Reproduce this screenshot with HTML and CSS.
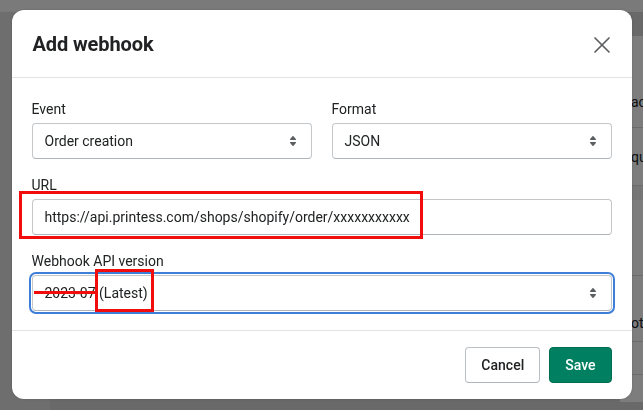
FILE: index.html
```html
<!DOCTYPE html>
<html lang="en">
<head>
<meta charset="utf-8">
<title>Add webhook</title>
<link rel="stylesheet" href="styles.css">
</head>
<body>
<div class="page">
  <div class="topbar"></div>
  <div class="content">
    <div class="nav"></div>
    <div class="main">
      <div class="card">
        <div class="card-row r1"><span>ac</span></div>
        <div class="card-row r2"><span>qu</span></div>
        <div class="card-band"></div>
        <div class="card-row r3"></div>
        <div class="card-row r4"><span>ot</span></div>
        <div class="card-row r5"></div>
      </div>
    </div>
  </div>
</div>

<div class="backdrop">
  <div class="modal">
    <div class="modal-header">
      <h2 class="modal-title">Add webhook</h2>
      <button class="close-btn" aria-label="Close">
        <svg width="20" height="20" viewBox="0 0 20 20"><path d="M3 3 L17 17 M17 3 L3 17" stroke="#5c5f62" stroke-width="1.7" stroke-linecap="round" fill="none"/></svg>
      </button>
    </div>
    <div class="modal-body">
      <div class="row-2">
        <div class="field">
          <label class="label">Event</label>
          <div class="select">
            <span class="select-text">Order creation</span>
            <svg class="select-arrows" width="20" height="20" viewBox="0 0 20 20"><path d="M7.676 9h4.648c.563 0 .879-.603.53-1.014l-2.323-2.746a.708.708 0 0 0-1.062 0l-2.324 2.746c-.347.411-.032 1.014.531 1.014Zm4.648 2h-4.648c-.563 0-.878.603-.53 1.014l2.323 2.746c.27.32.792.32 1.062 0l2.323-2.746c.349-.411.033-1.014-.53-1.014Z" fill="#5c5f62"/></svg>
          </div>
        </div>
        <div class="field">
          <label class="label">Format</label>
          <div class="select">
            <span class="select-text">JSON</span>
            <svg class="select-arrows" width="20" height="20" viewBox="0 0 20 20"><path d="M7.676 9h4.648c.563 0 .879-.603.53-1.014l-2.323-2.746a.708.708 0 0 0-1.062 0l-2.324 2.746c-.347.411-.032 1.014.531 1.014Zm4.648 2h-4.648c-.563 0-.878.603-.53 1.014l2.323 2.746c.27.32.792.32 1.062 0l2.323-2.746c.349-.411.033-1.014-.53-1.014Z" fill="#5c5f62"/></svg>
          </div>
        </div>
      </div>
      <div class="field">
        <label class="label">URL</label>
        <div class="input">https://api.printess.com/shops/shopify/order/xxxxxxxxxxx</div>
      </div>
      <div class="field">
        <label class="label">Webhook API version</label>
        <div class="select focused">
          <span class="select-text">2023-07 (Latest)</span>
          <svg class="select-arrows" width="20" height="20" viewBox="0 0 20 20"><path d="M7.676 9h4.648c.563 0 .879-.603.53-1.014l-2.323-2.746a.708.708 0 0 0-1.062 0l-2.324 2.746c-.347.411-.032 1.014.531 1.014Zm4.648 2h-4.648c-.563 0-.878.603-.53 1.014l2.323 2.746c.27.32.792.32 1.062 0l2.323-2.746c.349-.411.033-1.014-.53-1.014Z" fill="#5c5f62"/></svg>
        </div>
      </div>
    </div>
    <div class="modal-footer">
      <button class="btn btn-secondary">Cancel</button>
      <button class="btn btn-primary">Save</button>
    </div>

    <div class="mark mark-url"></div>
    <div class="mark mark-latest"></div>
    <div class="mark-strike"></div>
  </div>
</div>
</body>
</html>
```

FILE: styles.css
```css
* { box-sizing: border-box; }

html, body {
  margin: 0;
  padding: 0;
  width: 643px;
  height: 410px;
  overflow: hidden;
  font-family: Roboto, "Liberation Sans", sans-serif;
  color: #202223;
}

/* background page */
.page {
  display: flex;
  flex-direction: column;
  width: 643px;
  height: 410px;
  background: #f4f4f5;
}
.topbar {
  height: 12px;
  background: #f4f4f5;
}
.content {
  flex: 1;
  display: flex;
}
.nav {
  width: 50px;
  background: #dcdcdc;
}
.main {
  flex: 1;
  background: #d2d2d2;
  padding-left: 570px;
  padding-top: 24px;
}
.card {
  width: 23px;
  height: 366px;
  background: #fafafa;
  display: flex;
  flex-direction: column;
  overflow: hidden;
}
.card-row {
  display: flex;
  align-items: center;
  padding-left: 11px;
  font-size: 14px;
  color: #202223;
  border-bottom: 1px solid #d8d8d8;
}
.r1 { height: 92px; align-items: flex-end; padding-bottom: 17px; }
.r2 { height: 58px; }
.card-band { height: 14px; background: #ececec; }
.r3 { height: 76px; }
.r4 { height: 66px; align-items: flex-end; padding-bottom: 10px; }
.r5 { height: 33px; }

/* overlay */
.backdrop {
  position: fixed;
  inset: 0;
  background: rgba(0, 0, 0, 0.5);
  display: flex;
  justify-content: center;
  align-items: flex-start;
  padding-top: 10px;
}
.modal {
  position: relative;
  width: 620px;
  background: #fff;
  border-radius: 12px;
  box-shadow: 0 0 3px rgba(0,0,0,0.15);
}
.modal-header {
  height: 68px;
  display: flex;
  align-items: center;
  justify-content: space-between;
  padding: 0 20px 0 21px;
  border-bottom: 1px solid #e1e3e5;
}
.modal-title {
  margin: 0;
  font-size: 20px;
  font-weight: 700;
  line-height: 28px;
  color: #202223;
  letter-spacing: -0.1px;
}
.close-btn {
  border: 0;
  background: none;
  padding: 0;
  width: 20px;
  height: 20px;
  display: flex;
  margin-top: 2px;
}

.modal-body {
  padding: 21px 20px 19px;
  display: flex;
  flex-direction: column;
  gap: 16px;
}
.row-2 {
  display: grid;
  grid-template-columns: 1fr 1fr;
  gap: 20px;
}
.field {
  display: flex;
  flex-direction: column;
}
.label {
  font-size: 14px;
  line-height: 20px;
  margin-bottom: 4px;
  color: #202223;
}
.select, .input {
  height: 36px;
  border: 1px solid #c4c7ca;
  border-bottom-color: #aeb4b9;
  border-radius: 4px;
  display: flex;
  align-items: center;
  padding: 0 8px 0 12px;
  font-size: 14px;
  color: #202223;
  background: #fff;
}
.input { white-space: nowrap; }
.select-text { flex: 1; }
.select-arrows { flex: none; }
.focused {
  outline: 2px solid #3d7ed8;
  outline-offset: 1px;
}

.modal-footer {
  border-top: 1px solid #e1e3e5;
  padding: 16px 20px 16px;
  display: flex;
  justify-content: flex-end;
  gap: 9px;
}
.btn {
  height: 36px;
  border-radius: 4px;
  font-family: Roboto, "Liberation Sans", sans-serif;
  font-size: 14px;
  font-weight: 500;
  padding: 0 15px;
}
.btn-secondary {
  background: #fff;
  border: 1px solid #babfc3;
  border-bottom-color: #aeb4b9;
  color: #202223;
}
.btn-primary {
  background: #008060;
  border: 1px solid #006e52;
  color: #fff;
}

/* annotation marks */
.mark {
  position: absolute;
  border: 3px solid #f20d0d;
}
.mark-url {
  left: 7px;
  top: 181px;
  width: 404px;
  height: 48px;
}
.mark-latest {
  left: 83px;
  top: 259px;
  width: 59px;
  height: 43px;
}
.mark-strike {
  position: absolute;
  left: 22px;
  top: 281px;
  width: 62px;
  height: 3px;
  background: #f20d0d;
}
```
